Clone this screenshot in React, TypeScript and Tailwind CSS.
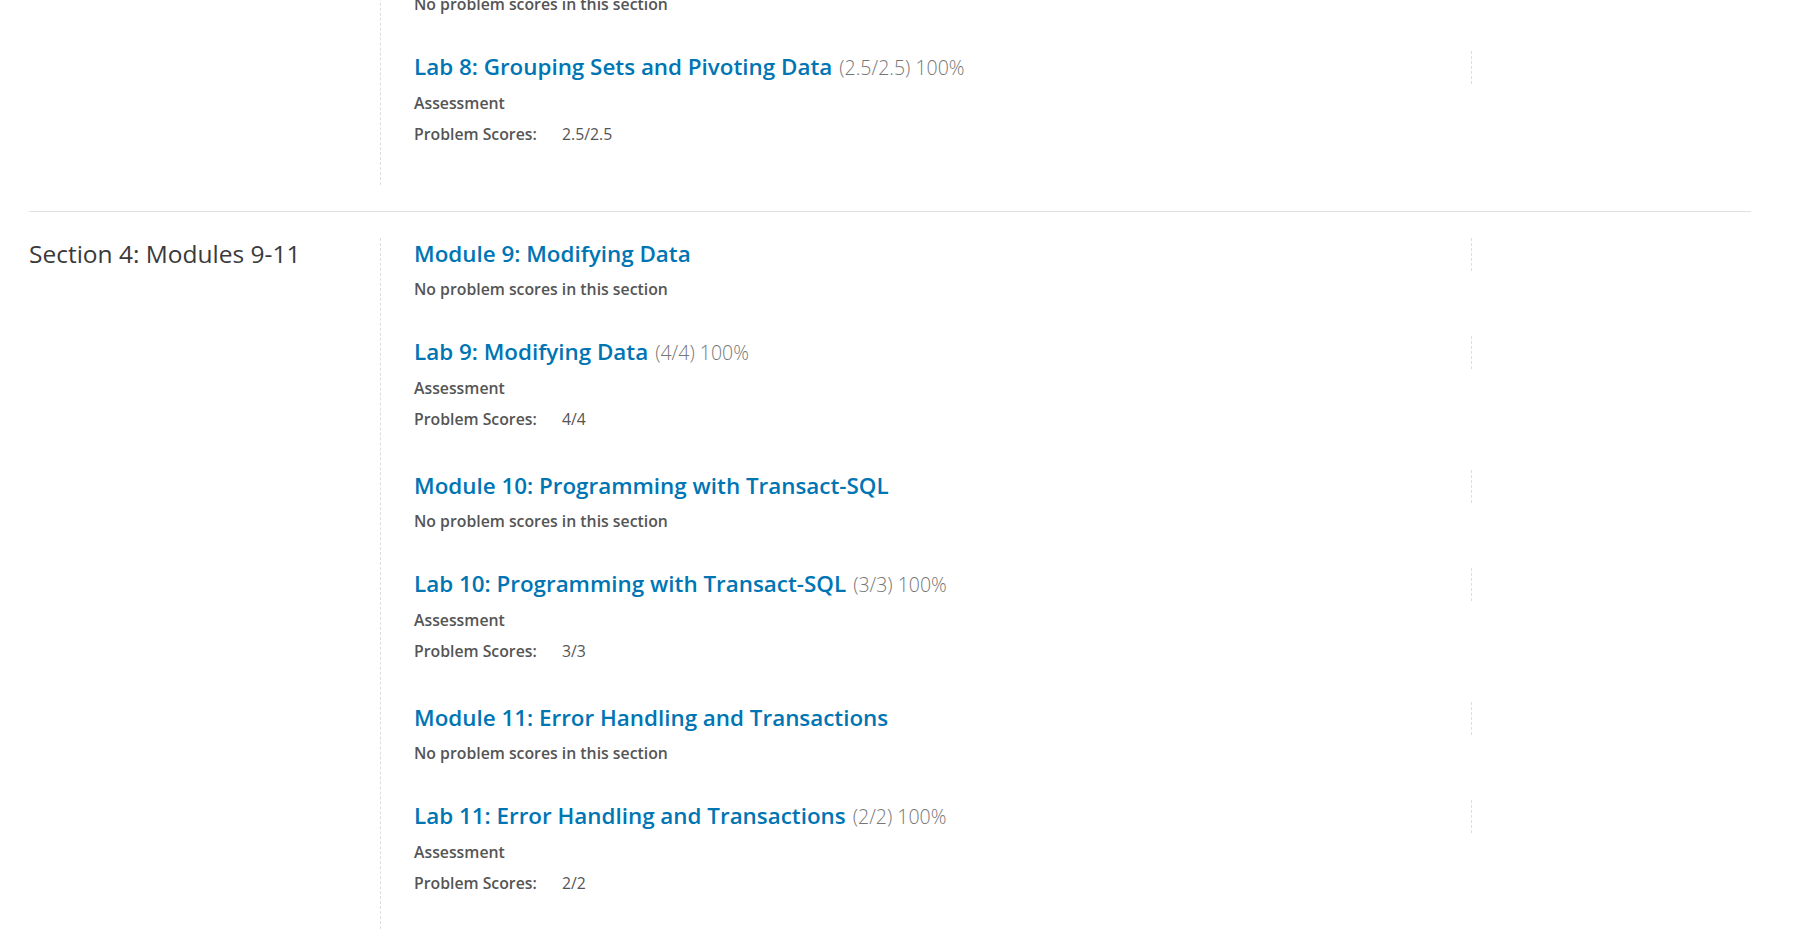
import React from "react";

type Item =
  | { kind: "module"; title: string }
  | { kind: "lab"; title: string; score: string; problems: string };

type Chapter = { name: string; items: Item[] };

const chapters: Chapter[] = [
  {
    name: "Section 3: Modules 6-8",
    items: [
      { kind: "module", title: "Module 8: Grouping Sets and Pivoting Data" },
      {
        kind: "lab",
        title: "Lab 8: Grouping Sets and Pivoting Data",
        score: "(2.5/2.5) 100%",
        problems: "2.5/2.5",
      },
    ],
  },
  {
    name: "Section 4: Modules 9-11",
    items: [
      { kind: "module", title: "Module 9: Modifying Data" },
      { kind: "lab", title: "Lab 9: Modifying Data", score: "(4/4) 100%", problems: "4/4" },
      { kind: "module", title: "Module 10: Programming with Transact-SQL" },
      {
        kind: "lab",
        title: "Lab 10: Programming with Transact-SQL",
        score: "(3/3) 100%",
        problems: "3/3",
      },
      { kind: "module", title: "Module 11: Error Handling and Transactions" },
      {
        kind: "lab",
        title: "Lab 11: Error Handling and Transactions",
        score: "(2/2) 100%",
        problems: "2/2",
      },
    ],
  },
];

const TitleRow = ({ title, score }: { title: string; score?: string }) => (
  <div className="flex h-[33px] items-start">
    <h3 className="flex-1 text-[22.4px] leading-[32px] whitespace-nowrap">
      <a href="#" className="font-semibold text-[#0075b4]">
        {title}
      </a>
      {score && <span className="ml-[7px] text-[19.5px] font-light text-[#777]">{score}</span>}
    </h3>
    {/* chart placeholder on the right */}
    <div className="h-[33px] w-[280px] border-l border-dashed border-[#ddd]" />
  </div>
);

const SectionItem = ({ item }: { item: Item }) => {
  if (item.kind === "module") {
    return (
      <div className="pb-[37px]">
        <TitleRow title={item.title} />
        <p className="mt-[8px] text-[15.8px] leading-[20px] font-semibold text-[#555]">
          No problem scores in this section
        </p>
      </div>
    );
  }
  return (
    <div className="pb-[41px]">
      <TitleRow title={item.title} score={item.score} />
      <p className="mt-[9px] text-[15.8px] leading-[20px] font-semibold text-[#555]">Assessment</p>
      <dl className="mt-[11px] flex text-[15.8px] leading-[20px] text-[#555]">
        <dt className="w-[148px] font-semibold">Problem Scores:</dt>
        <dd>{item.problems}</dd>
      </dl>
    </div>
  );
};

export default function App() {
  return (
    <div
      className="h-[929px] overflow-hidden bg-white"
      style={{ fontFamily: "'Open Sans', 'Noto Sans', sans-serif" }}
    >
      <div className="-mt-[73px] ml-[29px] w-[1722px]">
        {chapters.map((ch) => (
          <section key={ch.name} className="flex border-b border-[#e1e1e1] py-[26px]">
            <h2 className="w-[351px] text-[24.5px] leading-[32px] text-[#3a3a3a]">{ch.name}</h2>
            <div className="flex-1 border-l border-dashed border-[#ddd] pl-[33px]">
              {ch.items.map((it) => (
                <SectionItem key={it.title} item={it} />
              ))}
            </div>
          </section>
        ))}
      </div>
    </div>
  );
}
